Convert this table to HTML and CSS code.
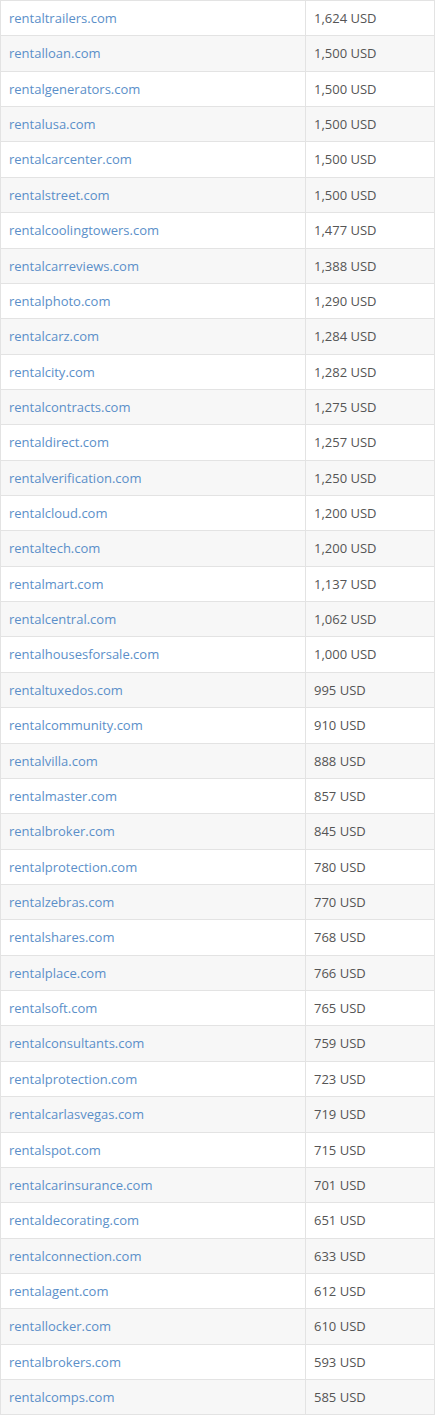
FILE: index.html
```html
<!DOCTYPE html>
<html>
<head>
<meta charset="utf-8">
<link rel="stylesheet" href="styles.css">
</head>
<body>
<table class="domains">
<tbody>
<tr><td><a href="#">rentaltrailers.com</a></td><td>1,624 USD</td></tr>
<tr><td><a href="#">rentalloan.com</a></td><td>1,500 USD</td></tr>
<tr><td><a href="#">rentalgenerators.com</a></td><td>1,500 USD</td></tr>
<tr><td><a href="#">rentalusa.com</a></td><td>1,500 USD</td></tr>
<tr><td><a href="#">rentalcarcenter.com</a></td><td>1,500 USD</td></tr>
<tr><td><a href="#">rentalstreet.com</a></td><td>1,500 USD</td></tr>
<tr><td><a href="#">rentalcoolingtowers.com</a></td><td>1,477 USD</td></tr>
<tr><td><a href="#">rentalcarreviews.com</a></td><td>1,388 USD</td></tr>
<tr><td><a href="#">rentalphoto.com</a></td><td>1,290 USD</td></tr>
<tr><td><a href="#">rentalcarz.com</a></td><td>1,284 USD</td></tr>
<tr><td><a href="#">rentalcity.com</a></td><td>1,282 USD</td></tr>
<tr><td><a href="#">rentalcontracts.com</a></td><td>1,275 USD</td></tr>
<tr><td><a href="#">rentaldirect.com</a></td><td>1,257 USD</td></tr>
<tr><td><a href="#">rentalverification.com</a></td><td>1,250 USD</td></tr>
<tr><td><a href="#">rentalcloud.com</a></td><td>1,200 USD</td></tr>
<tr><td><a href="#">rentaltech.com</a></td><td>1,200 USD</td></tr>
<tr><td><a href="#">rentalmart.com</a></td><td>1,137 USD</td></tr>
<tr><td><a href="#">rentalcentral.com</a></td><td>1,062 USD</td></tr>
<tr><td><a href="#">rentalhousesforsale.com</a></td><td>1,000 USD</td></tr>
<tr><td><a href="#">rentaltuxedos.com</a></td><td>995 USD</td></tr>
<tr><td><a href="#">rentalcommunity.com</a></td><td>910 USD</td></tr>
<tr><td><a href="#">rentalvilla.com</a></td><td>888 USD</td></tr>
<tr><td><a href="#">rentalmaster.com</a></td><td>857 USD</td></tr>
<tr><td><a href="#">rentalbroker.com</a></td><td>845 USD</td></tr>
<tr><td><a href="#">rentalprotection.com</a></td><td>780 USD</td></tr>
<tr><td><a href="#">rentalzebras.com</a></td><td>770 USD</td></tr>
<tr><td><a href="#">rentalshares.com</a></td><td>768 USD</td></tr>
<tr><td><a href="#">rentalplace.com</a></td><td>766 USD</td></tr>
<tr><td><a href="#">rentalsoft.com</a></td><td>765 USD</td></tr>
<tr><td><a href="#">rentalconsultants.com</a></td><td>759 USD</td></tr>
<tr><td><a href="#">rentalprotection.com</a></td><td>723 USD</td></tr>
<tr><td><a href="#">rentalcarlasvegas.com</a></td><td>719 USD</td></tr>
<tr><td><a href="#">rentalspot.com</a></td><td>715 USD</td></tr>
<tr><td><a href="#">rentalcarinsurance.com</a></td><td>701 USD</td></tr>
<tr><td><a href="#">rentaldecorating.com</a></td><td>651 USD</td></tr>
<tr><td><a href="#">rentalconnection.com</a></td><td>633 USD</td></tr>
<tr><td><a href="#">rentalagent.com</a></td><td>612 USD</td></tr>
<tr><td><a href="#">rentallocker.com</a></td><td>610 USD</td></tr>
<tr><td><a href="#">rentalbrokers.com</a></td><td>593 USD</td></tr>
<tr><td><a href="#">rentalcomps.com</a></td><td>585 USD</td></tr>
</tbody>
</table>
</body>
</html>
```
FILE: styles.css
```css
html, body {
  margin: 0;
  padding: 0;
  background: #fff;
}
body {
  font-family: "Open Sans", "Liberation Sans", sans-serif;
  font-size: 13px;
  color: #555;
}
.domains {
  width: 435px;
  border-collapse: collapse;
  border: 1px solid #e3e3e3;
}
.domains td {
  border: 1px solid #e3e3e3;
  padding: 8px 8px;
  line-height: 18.36px;
  vertical-align: top;
  text-align: left;
}
.domains td:first-child {
  width: 288px;
}
.domains tr:nth-child(even) td {
  background: #f7f7f7;
}
.domains a {
  color: #5b8fc9;
  text-decoration: none;
}
```
